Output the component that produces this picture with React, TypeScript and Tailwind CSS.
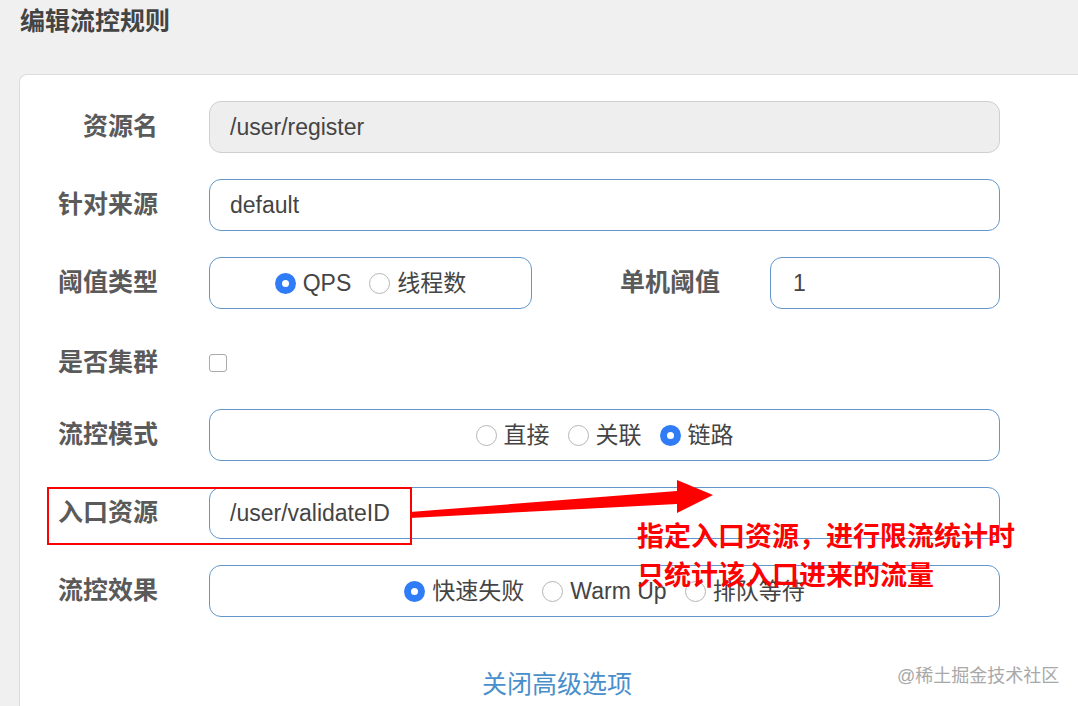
import React from 'react';

const font = "font-['Liberation_Sans','Noto_Sans_CJK_SC',sans-serif]";

const Radio = ({ checked, label }: { checked?: boolean; label: string }) => (
  <span className="flex items-center gap-[7px]">
    {checked ? (
      <span className="flex h-[21px] w-[21px] items-center justify-center rounded-full bg-[#2f7cf6]">
        <span className="h-[7px] w-[7px] rounded-full bg-white" />
      </span>
    ) : (
      <span className="h-[21px] w-[21px] rounded-full border-[1.5px] border-[#b5b5b5] bg-white" />
    )}
    <span>{label}</span>
  </span>
);

const Label = ({ children, className = 'w-[138px]' }: { children: React.ReactNode; className?: string }) => (
  <div className={`${className} shrink-0 text-right text-[25px] font-bold text-[#5a5a5a]`}>{children}</div>
);

const box = 'h-[52px] rounded-[12px] border-[1.5px] border-[#6396cc] bg-white text-[23px] text-[#444] flex items-center';

const App = () => {
  return (
    <div className={`${font} relative flex min-h-[706px] w-full flex-col overflow-hidden bg-[#f0f0f0]`}>
      <div className="h-[74px] px-[20px] pt-[5px]">
        <h2 className="text-[25px] font-bold leading-[32px] text-[#444]">编辑流控规则</h2>
      </div>

      <div className="ml-[19px] flex-1 rounded-tl-[8px] border-l border-t border-[#dddddd] bg-white pt-[26px]">
        {/* 资源名 */}
        <div className="flex h-[52px] items-center">
          <Label>资源名</Label>
          <div className="ml-[51px] flex h-[52px] w-[791px] items-center rounded-[12px] border-[1.5px] border-[#cfcfcf] bg-[#eeeeee] px-[20px] text-[23px] text-[#444]">
            /user/register
          </div>
        </div>

        {/* 针对来源 */}
        <div className="mt-[26px] flex h-[52px] items-center">
          <Label>针对来源</Label>
          <div className={`${box} ml-[51px] w-[791px] px-[20px]`}>default</div>
        </div>

        {/* 阈值类型 / 单机阈值 */}
        <div className="mt-[26px] flex h-[52px] items-center">
          <Label>阈值类型</Label>
          <div className={`${box} ml-[51px] w-[323px] justify-center gap-[18px]`}>
            <Radio checked label="QPS" />
            <Radio label="线程数" />
          </div>
          <Label className="w-[188px]">单机阈值</Label>
          <div className={`${box} ml-[50px] w-[230px] px-[22px]`}>1</div>
        </div>

        {/* 是否集群 */}
        <div className="mt-[28px] flex h-[52px] items-center">
          <Label>是否集群</Label>
          <span className="ml-[51px] h-[18px] w-[18px] rounded-[3px] border-[1.5px] border-[#aaa] bg-white" />
        </div>

        {/* 流控模式 */}
        <div className="mt-[20px] flex h-[52px] items-center">
          <Label>流控模式</Label>
          <div className={`${box} ml-[51px] w-[791px] justify-center gap-[18px]`}>
            <Radio label="直接" />
            <Radio label="关联" />
            <Radio checked label="链路" />
          </div>
        </div>

        {/* 入口资源 */}
        <div className="relative mt-[26px] flex h-[52px] items-center">
          <Label>入口资源</Label>
          <div className={`${box} ml-[51px] w-[791px] px-[20px]`}>/user/validateID</div>
          <div className="absolute left-[27px] top-0 h-[58px] w-[365px] border-2 border-[#ff0000]" />
        </div>

        {/* 流控效果 */}
        <div className="mt-[26px] flex h-[52px] items-center">
          <Label>流控效果</Label>
          <div className={`${box} ml-[51px] w-[791px] justify-center gap-[18px]`}>
            <Radio checked label="快速失败" />
            <Radio label="Warm Up" />
            <Radio label="排队等待" />
          </div>
        </div>

        <div className="ml-[462px] mt-[51px] text-[25px] leading-[32px] text-[#4a8fcc]">关闭高级选项</div>
      </div>

      <svg className="pointer-events-none absolute left-0 top-0" width="1078" height="706">
        <polygon
          points="410,512 677,491 677,480 713,495 677,513 677,504 410,518"
          fill="#ff0000"
        />
      </svg>

      <div className="pointer-events-none absolute left-[637px] top-[518px] text-[27px] font-bold leading-[39px] text-[#ff0000]">
        <div>指定入口资源，进行限流统计时</div>
        <div>只统计该入口进来的流量</div>
      </div>

      <div className="pointer-events-none absolute left-[897px] top-[664px] text-[18px] leading-[24px] text-[#a8a8a8]">
        @稀土掘金技术社区
      </div>
    </div>
  );
};

export default App;
